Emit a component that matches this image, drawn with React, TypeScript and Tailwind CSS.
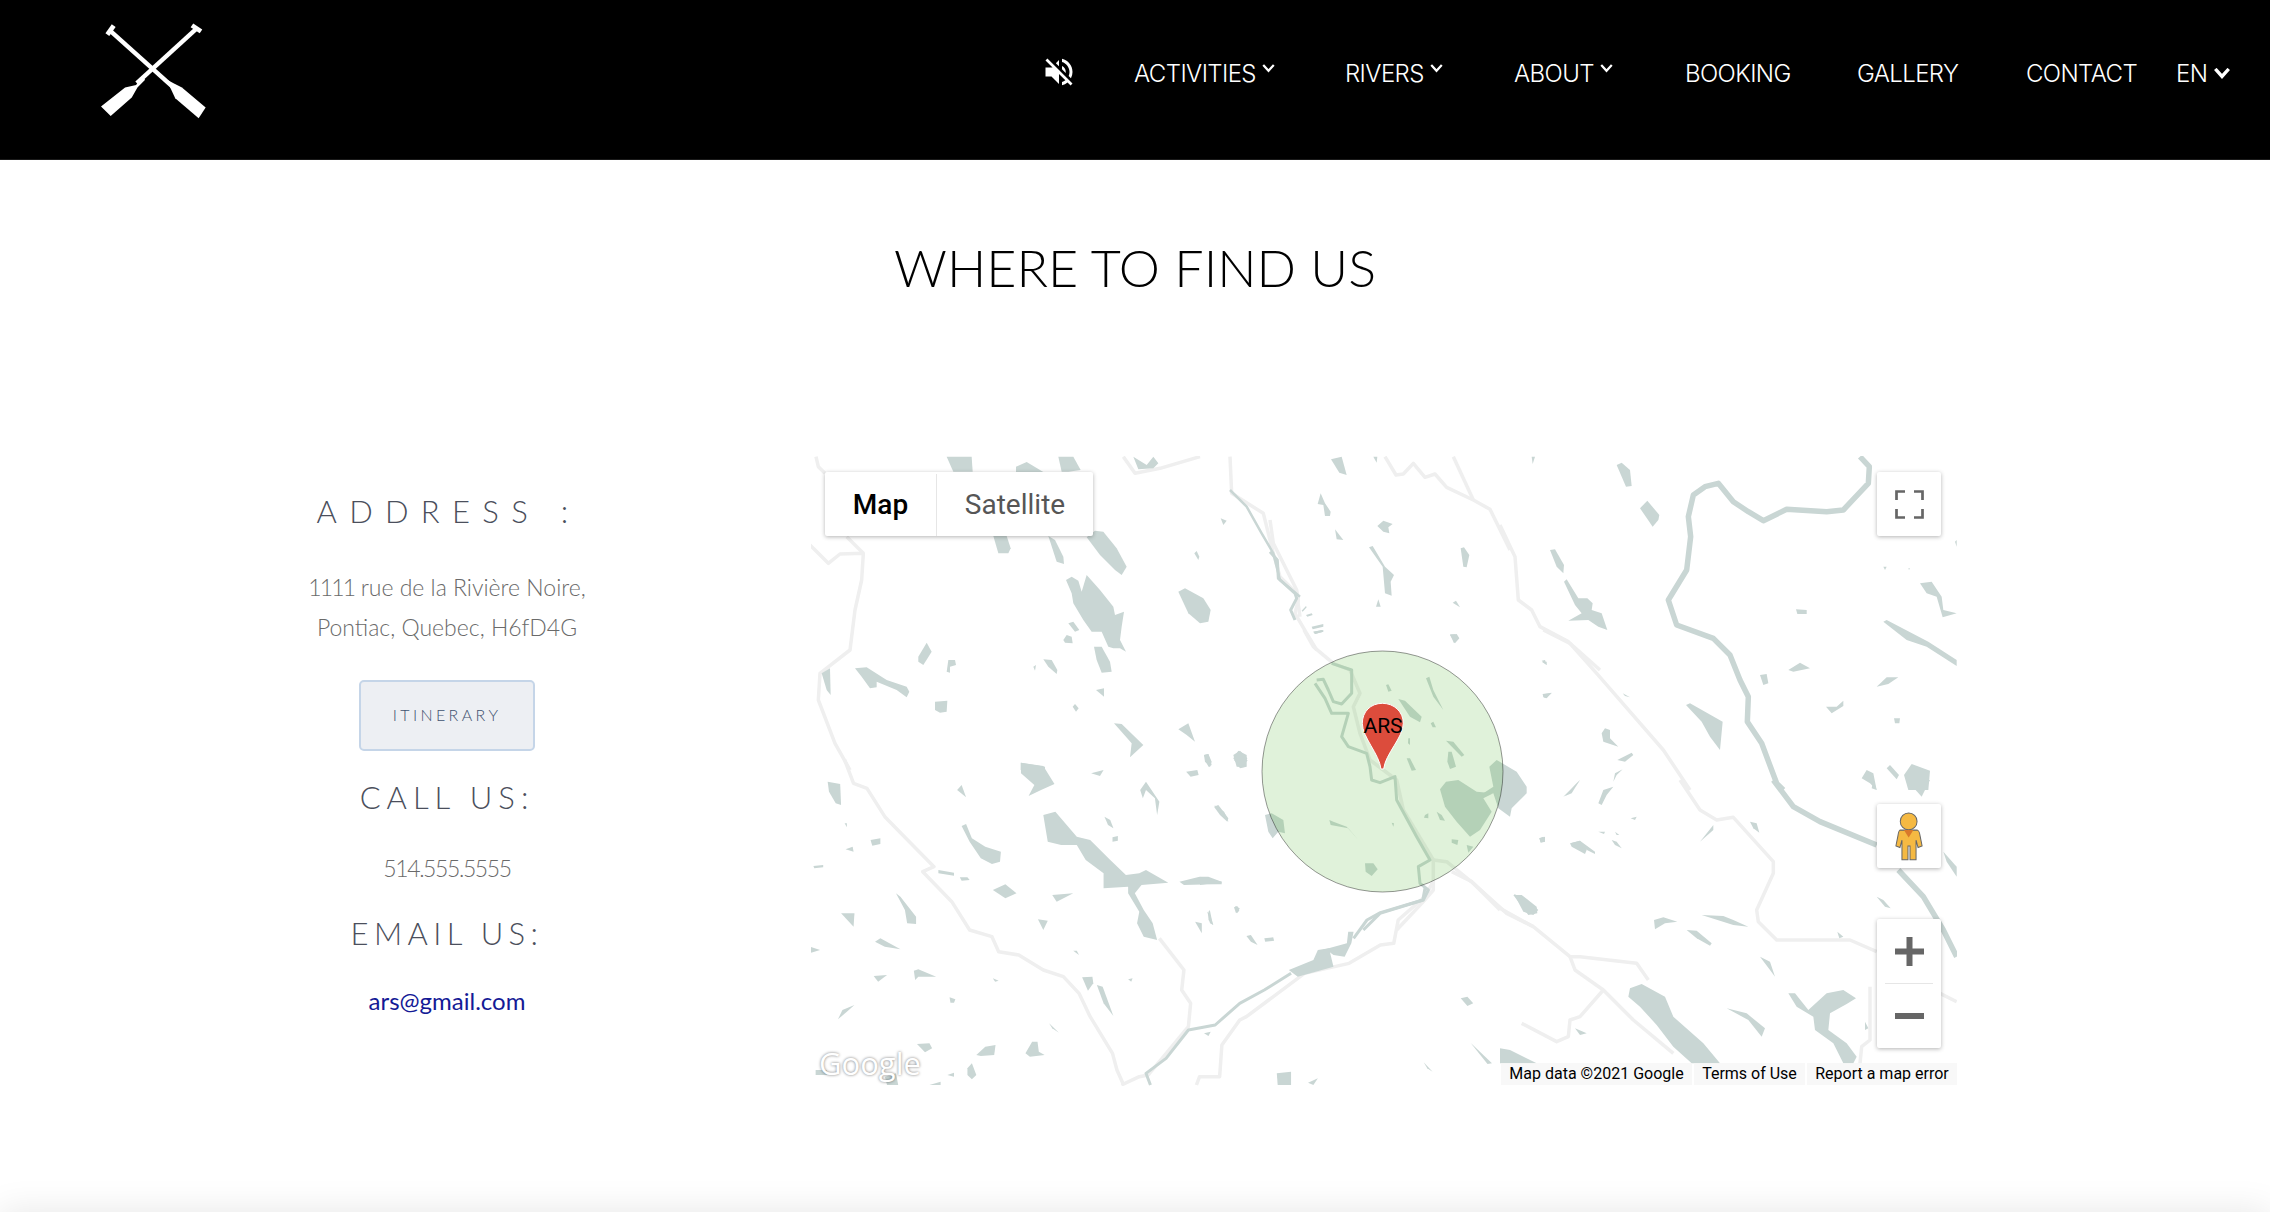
import React from "react";
import { MdVolumeOff } from "react-icons/md";

type Group = { x: number; y: number; sx: number; sy: number; water: string[]; rivers?: [string, number][]; roads: string[] };

const groups: Group[] = [
  {
    x: 800, y: 450, sx: 3, sy: 3,
    water: [
      "440,20 515,20 518,65 460,65", "648,50 680,36 730,66 648,66", "775,20 820,20 842,60 805,65 785,65",
      "580,258 620,258 632,295 625,310 595,310", "745,258 765,270 790,320 792,342 770,335",
      "885,242 910,245 950,295 980,350 965,375 945,360 900,315 860,262",
      "798,390 815,380 835,392 845,425 860,375 900,420 940,470 945,495 972,485 965,530 960,570 978,605 960,595 940,595 925,590 905,545 875,545 850,510 820,460 815,430",
      "805,520 820,515 838,540 825,545", "790,570 800,555 815,560 818,580 795,578", "882,590 905,590 930,635 935,665 905,668 890,630",
      "1135,425 1155,415 1210,445 1232,480 1225,515 1200,520 1165,490", "1262,205 1280,212 1270,225", "1183,310 1190,303 1198,320 1195,330",
      "355,620 380,578 395,605 370,645 355,635", "440,665 445,630 465,630 468,645 450,650 450,668",
      "165,655 200,652 260,690 320,710 328,725 320,742 290,720 230,695 230,712 210,715 185,680", "65,670 90,655 92,735 80,720",
      "405,755 442,752 440,785 420,788 405,780", "730,628 755,630 772,660 770,672 745,650", "700,650 708,645 705,662", "888,720 912,715 912,740",
      "818,770 825,762 836,775 828,785", "942,820 965,822 1030,885 990,922 995,880", "1135,838 1165,820 1185,875 1160,855",
      "1212,915 1225,912 1235,945 1225,950", "1300,925 1315,902 1340,915 1340,950 1320,955", "662,938 735,950 735,960 662,960",
      "1000,20 1040,45 1060,20 1075,40 1060,55 1015,58",
    ],
    rivers: [["1290,120 1340,170 1385,250 1420,310 1440,390 1500,440", 2.5]],
    roads: [
      "48,20 55,50 75,70", "30,285 85,340 120,312 190,310 185,390 165,480 150,600 60,670 55,750 105,880 150,960", "140,260 190,310",
      "970,20 1005,70 1080,55 1200,20", "1290,20 1295,130 1390,190 1420,310 1440,380 1490,430 1500,500",
    ],
  },
  {
    x: 1270, y: 450, sx: 3, sy: 3,
    water: [
      "183,28 215,20 230,75 208,68", "310,20 322,20 320,38", "152,130 165,160 182,185 180,198 165,198 160,165 143,162", "195,238 220,270 200,268",
      "322,228 340,212 368,222 355,232 358,250 340,245", "297,292 308,288 345,350 372,375 362,395 365,437 345,430 338,350",
      "572,295 582,292 598,315 590,352 580,350", "318,470 325,448 332,470", "548,458 558,452 570,472", "540,553 555,553 567,565 552,580",
      "95,482 108,468 110,472 98,485", "108,495 125,490 128,495 112,500", "125,530 160,522 160,530 128,538", "130,545 160,540 160,545 135,552",
    ],
    rivers: [["0,305 22,330 25,385 75,430 80,445 62,480 75,510", 3]],
    roads: ["345,20 378,75 400,72 430,40 465,82 495,72 530,112 610,150 660,178 720,300", "550,20 610,150", "0,210 10,280 80,420 85,450 75,490 110,550 140,600"],
  },
  {
    x: 1200, y: 630, sx: 3, sy: 3,
    water: [
      "340,5 365,0 370,5 345,12", "750,15 770,12 778,25 765,40", "1025,95 1040,95 1040,105", "1028,192 1055,188 1040,205 1030,202",
      "12,375 25,372 35,395 30,412 15,395", "100,375 120,362 142,385 130,412 110,410", "42,530 55,525 85,565 82,575 60,555",
      "195,555 215,550 250,570 255,610 235,605 218,625 205,605", "0,740 25,740 65,755 65,763 20,762 0,765", "102,832 112,828 118,842 108,850", "22,845 28,850 40,885 30,880",
      "868,410 890,390 950,425 980,470 980,490 935,535 930,560 895,535 880,490 850,490 880,470",
      "720,478 738,455 775,450 830,485 880,490 850,505 875,545 840,600 810,620 770,575 735,530",
      "558,165 565,163 575,182 565,185", "678,145 688,140 700,180 730,240 700,200", "595,207 615,212 665,260 660,277 630,260", "692,280 700,275 708,292 698,292",
      "738,332 760,335 793,375 785,380 760,355", "745,365 755,365 768,410 750,417 742,395", "620,385 630,385 648,420 635,422", "625,325 630,325 630,345 624,340",
      "675,555 685,550 685,565 672,563", "710,545 725,555 735,572 720,570", "575,578 582,580 580,590", "755,628 775,630 772,645 755,638", "800,645 820,650 805,668",
      "495,700 520,700 533,718 515,738 497,725", "388,570 400,575 440,590 475,630 445,595 392,585",
      "1110,640 1140,632 1160,660 1155,672 1115,650", "1018,625 1030,620 1035,635 1022,637", "940,795 965,795 1010,830 1012,850 985,855", "1090,500 1140,450 1110,490",
    ],
    rivers: [
      ["350,150 370,148 385,180 400,215 425,222 455,190 455,120 395,100", 3],
      ["345,160 375,205 395,250 445,250 425,320 445,350 500,370 510,410 515,450 540,458 585,440 590,510 650,620 690,690 655,710 660,760 685,780 670,810 540,850 490,900", 3],
    ],
    roads: ["312,0 340,50 400,100 450,120 480,190 460,230 480,310 510,390 590,450 610,540 700,690 700,780 670,815 590,900", "700,690 740,695 820,760 920,850 1000,890", "1030,0 1110,40 1200,120"],
  },
  {
    x: 800, y: 760, sx: 2.24, sy: 3,
    water: [
      "495,8 545,18 570,72 540,90 512,108 525,75 495,40", "652,40 680,30 672,48", "865,35 890,30 893,45 875,50", "910,0 920,0 918,20", "972,0 1003,0 990,22",
      "62,65 90,72 92,135 80,130 65,95", "352,90 362,75 372,112", "100,190 105,190 105,202", "158,240 180,235 180,252 162,257", "102,268 118,260 120,275", "30,318 52,315 52,322 32,325",
      "362,198 372,192 385,235 415,260 450,275 448,305 430,312 405,295 380,245",
      "545,165 572,155 620,230 650,240 695,300 730,345 760,340 775,330 825,368 765,375 750,400 770,450 790,490 800,540 770,530 755,490 760,455 735,400 735,380 680,385 680,340 640,300 620,255 585,255 555,245",
      "850,365 895,350 945,365 942,372 860,375", "310,330 345,338 345,347 310,340", "358,352 375,352 380,360 362,362", "432,390 460,373 485,400 460,415", "565,405 612,400 575,425",
      "215,400 225,410 260,470 260,492 240,490 235,450", "92,460 122,460 120,500", "168,545 180,535 225,568 190,560", "22,560 45,570 25,578", "533,478 555,482 545,510", "612,572 620,572 625,585",
      "682,170 695,180 702,205 690,195", "700,232 712,228 712,242 700,245", "762,90 775,65 805,125 800,165 795,115 775,90 768,115", "928,135 950,155 960,185 945,165",
      "975,438 985,445 980,460", "885,485 900,490 900,520", "915,455 918,450 925,495 915,480", "1000,528 1010,525 1025,555 1010,545", "1040,535 1060,532 1062,542 1042,545",
      "165,648 195,645 175,665", "255,632 265,628 305,650 265,650 258,660", "432,655 445,662 437,665", "632,652 655,650 657,670 645,692", "665,675 678,680 702,768 680,730", "735,658 745,655 742,665",
      "335,712 348,718 345,728 337,728", "122,735 95,750 85,778 105,755", "558,790 580,818 565,805", "262,852 290,850 296,865 280,877", "395,885 415,860 438,855 435,885 405,888",
      "505,880 520,845 532,845 535,875 548,885 515,890", "375,925 385,910 395,945 385,958 375,945", "35,930 60,930 60,945 35,945", "190,950 215,940 220,975 195,975", "330,945 345,938 345,950", "290,975 315,965 315,975",
      "1480,715 1495,710 1508,730 1495,738", "1502,848 1550,910 1540,912", "1397,907 1417,935 1405,925", "1068,940 1100,935 1100,975 1070,975", "1138,968 1160,955 1150,975", "905,820 920,815 915,828",
      "1095,630 1150,600 1160,570 1185,565 1195,620 1115,650", "1170,570 1225,550 1228,515 1240,515 1235,550 1220,590 1195,585 1180,570",
    ],
    rivers: [
      ["785,975 775,940 820,895 870,810 930,795 985,730 1040,690 1100,640", 3],
      ["1240,535 1270,480 1300,458 1395,420 1400,385", 3],
    ],
    roads: [
      "100,0 120,70 150,85 190,170 230,225 300,320 275,335 340,425 380,510 430,530 445,575 490,585 545,630 590,650 625,700 650,770 700,880 710,930 725,975",
      "805,535 860,630 855,690 875,730 870,800 780,945 760,950 720,975",
      "1420,360 1400,410 1340,480 1330,550 1300,555 1230,610 1130,640 1050,720 1000,770 985,780 945,855 940,950 895,950 888,975",
      "1460,335 1505,365 1568,450",
    ],
  },
  {
    x: 1500, y: 450, sx: 3, sy: 3,
    water: [
      "350,45 365,38 390,60 395,108 378,110", "420,175 442,152 478,195 475,210 458,230", "150,300 165,298 192,345 190,370 170,350",
      "192,395 200,388 235,445 262,445 278,460 275,480 305,490 322,540 295,530 265,510 205,512 245,490 225,465",
      "125,632 135,630 140,645", "128,733 155,730 135,745", "95,20 105,20 98,42", "368,730 390,742 375,738",
      "558,765 570,760 668,815 660,900 630,860 605,815", "305,850 315,835 330,840 330,865 355,890 310,875", "352,930 395,908 400,915 375,935", "340,995 345,970 368,958 350,975", "212,1020 240,990 225,1005",
      "1150,515 1160,510 1285,575 1370,630 1370,648 1280,590 1220,570", "1260,400 1295,395 1325,440 1330,480 1370,490 1328,502 1310,440 1280,430",
      "888,478 920,480 920,492 892,492", "865,660 900,638 930,655 880,665", "780,675 800,672 805,700 790,705", "1130,710 1160,682 1195,682 1165,702", "978,770 1010,770 1030,752 1030,768 995,790",
      "1182,805 1200,805 1198,820 1185,820", "1150,350 1160,350 1155,360", "1225,355 1230,355 1227,360", "1365,275 1370,270 1370,290",
      "1212,975 1235,942 1290,962 1285,1020 1225,1020", "1160,955 1170,945 1197,975 1190,988", "1085,985 1100,960 1120,970 1130,1020 1110,1000",
    ],
    rivers: [["1080,20 1108,50 1105,100 1030,180 980,185 860,178 790,212 745,185 700,155 655,100 615,110 580,135 565,200 572,260 560,360 505,450 530,525 640,565 690,615 720,690 745,740 742,815 785,880 830,1000 850,1020", 5.5]],
    roads: ["0,225 45,320 55,450 95,480 120,530 205,575 290,670 490,900 570,1020"],
  },
  {
    x: 1500, y: 780, sx: 3, sy: 3,
    water: [
      "295,70 310,30 340,20 320,45 305,75", "392,115 410,110 405,120", "295,155 315,155 312,162", "345,155 358,165 350,165", "118,175 135,170 135,185 122,188", "212,190 240,182 285,215 285,222 250,205", "335,180 350,185 365,205 345,195",
      "600,185 640,135 640,150", "750,125 770,130 778,158 760,145", "42,342 80,358 115,390 100,405 70,395", "462,420 490,412 532,425 495,430 465,448", "560,450 590,452 635,490 630,497 590,475",
      "605,405 670,408 700,420 745,440 700,435", "780,530 810,545 825,590 810,570", "1130,350 1150,360 1172,385 1155,380", "1012,455 1030,470 1018,475",
      "390,625 425,612 495,650 520,710 610,790 660,850 575,850 520,800 470,735 420,680 385,650", "680,685 740,700 795,745 785,770 745,720", "225,745 260,760 240,765",
      "865,640 885,640 925,690 980,640 1030,630 1068,655 1040,672 990,700 985,750 1040,790 1070,830 1060,850 1030,850 1000,790 945,750 940,710 890,680",
      "1095,725 1105,745 1095,750", "0,805 30,810 110,850 0,850", "1120,0 1130,30 1115,25", "1220,0 1290,0 1265,50",
      "1330,215 1370,260 1370,290 1340,245", "195,48 240,0 215,40",
    ],
    rivers: [
      ["820,0 880,80 960,125 1130,195", 5.5],
      ["1195,270 1270,350 1330,450 1370,530", 5.5],
    ],
    roads: [
      "540,0 600,90 650,120 700,112 820,245 820,280 770,390 775,425 830,480 1050,480 1130,515", "0,385 100,440 210,530 240,530 410,550 445,600",
      "210,530 225,570 310,630 400,720 520,820", "310,630 240,710 210,720 205,770 170,785 65,730", "1110,620 1110,780 1085,800 1080,850", "1320,640 1370,665",
    ],
  },
];

function MapArt() {
  return (
    <svg viewBox="811 456 1146 630" className="absolute inset-0 h-full w-full" aria-hidden="true">
      {groups.map((g, i) => (
        <g key={`r${i}`} transform={`translate(${g.x} ${g.y}) scale(${1 / g.sx} ${1 / g.sy})`}>
          {g.roads.map((p, j) => (
            <polyline key={j} points={p} fill="none" stroke="#efefef" strokeWidth={3.5} strokeLinejoin="round" vectorEffect="non-scaling-stroke" />
          ))}
        </g>
      ))}
      {groups.map((g, i) => (
        <g key={`w${i}`} transform={`translate(${g.x} ${g.y}) scale(${1 / g.sx} ${1 / g.sy})`}>
          {(g.rivers || []).map(([p, w], j) => (
            <polyline key={j} points={p} fill="none" stroke="#c9d6d4" strokeWidth={w} strokeLinejoin="round" vectorEffect="non-scaling-stroke" />
          ))}
          {g.water.map((p, j) => (
            <polygon key={j} points={p} fill="#c9d6d4" />
          ))}
        </g>
      ))}
      <circle cx={1382.5} cy={771.5} r={120.5} fill="#64be46" fillOpacity={0.2} stroke="#000" strokeOpacity={0.4} strokeWidth={1} />
      <g transform="translate(1200 630) scale(0.3333)">
        <path
          d="M543,417 L551,417 C556,372 610,322 610,280 C610,245 582,220 547,220 C512,220 487,245 487,280 C487,322 538,372 543,417Z"
          fill="#dc4c3c"
          stroke="#fff"
          strokeWidth={1}
          vectorEffect="non-scaling-stroke"
        />
      </g>
    </svg>
  );
}

function Chevron({ w, sw }: { w: number; sw: number }) {
  return (
    <svg width={w} height={w * 0.7} viewBox="0 0 14 10" fill="none" stroke="#fff" strokeWidth={sw} strokeLinecap="square">
      <polyline points="2,2 7,7.5 12,2" />
    </svg>
  );
}

function Logo() {
  return (
    <svg width={107} height={98} viewBox="300 62 320 293" fill="#fff" aria-label="logo">
      <g stroke="#fff" strokeWidth={13} strokeLinecap="butt">
        <line x1={322} y1={100} x2={341} y2={73} strokeWidth={14} />
        <line x1={330} y1={88} x2={520} y2={258} />
        <line x1={575} y1={72} x2={602} y2={90} strokeWidth={14} />
        <line x1={587} y1={83} x2={410} y2={245} />
      </g>
      <polygon points="500,235 520,245 545,258 616,318 595,350 525,290 512,262" />
      <polygon points="425,225 408,250 375,258 303,315 332,343 395,288 412,258 435,235" />
    </svg>
  );
}

function Pegman() {
  return (
    <svg width={30} height={49} viewBox="1182 94 86 146" aria-hidden="true">
      <path
        d="M1198,148 L1250,148 Q1256,150 1258,165 L1264,195 L1252,200 L1246,178 L1246,236 L1228,236 L1228,195 L1222,195 L1222,236 L1204,236 L1204,178 L1198,200 L1186,195 L1192,165 Q1194,150 1198,148Z"
        fill="#f5b942"
        stroke="#666"
        strokeWidth={3}
      />
      <circle cx={1224} cy={122} r={25} fill="#f5b942" stroke="#666" strokeWidth={3} />
      <polygon points="1210,148 1238,148 1224,170" fill="#d9792b" />
    </svg>
  );
}

const nav: { label: string; w: string; chev?: boolean }[] = [
  { label: "ACTIVITIES", w: "w-[211px]", chev: true },
  { label: "RIVERS", w: "w-[169px]", chev: true },
  { label: "ABOUT", w: "w-[171px]", chev: true },
  { label: "BOOKING", w: "w-[172px]" },
  { label: "GALLERY", w: "w-[169px]" },
  { label: "CONTACT", w: "w-[150px]" },
];

const heading = "text-center text-[31px] leading-[40px] font-light text-[#4b4f5c]";
const body = "text-center text-[23px] leading-[40px] font-light text-[#6a6a6a]";

export default function App() {
  return (
    <div className="flex h-[1212px] flex-col overflow-hidden bg-white [font-family:Lato,sans-serif]">
      <header className="flex h-[160px] shrink-0 items-start border-b border-[#1a1a1a] bg-black pl-[100px] pt-[22px]">
        <Logo />
        <nav className="ml-[837px] mt-[30px] flex items-start text-white [font-family:Inter,sans-serif]">
          <div className="flex h-[44px] w-[90px] items-center">
            <MdVolumeOff size={36} className="-ml-[3px] -mt-[4px]" />
          </div>
          {nav.map((n) => (
            <a key={n.label} className={`${n.w} flex h-[44px] items-center gap-[6px] text-[24px] font-light tracking-[-0.6px]`}>
              <span>{n.label}</span>
              {n.chev && (
                <span className="-mt-[11px]">
                  <Chevron w={13} sw={2.4} />
                </span>
              )}
            </a>
          ))}
          <div className="flex h-[44px] items-center gap-[7px] text-[24px] font-light tracking-[-0.6px]">
            <span>EN</span>
            <Chevron w={16} sw={3} />
          </div>
        </nav>
      </header>

      <h1 className="mt-[74px] h-[66px] shrink-0 text-center text-[52px] leading-[66px] font-light tracking-[0.05px] text-black">
        WHERE TO FIND US
      </h1>

      <main className="mt-[156px] flex h-[630px] shrink-0 items-start">
        <section className="ml-[147px] flex w-[600px] flex-col items-center pt-[35px]">
          <h3 className={`${heading} pl-[3px] tracking-[12.3px]`}>ADDRESS :</h3>
          <p className={`${body} mt-[36px]`}>
            <span className="tracking-[-1.8px]">1111</span> rue de la Rivière Noire,
            <br />
            Pontiac, Quebec, H6fD4G
          </p>
          <a className="mt-[33px] flex h-[71px] w-[176px] items-center justify-center rounded-[5px] border-2 border-[#c5d5e8] bg-[#edeff3] pb-[2px] text-[16px] font-light tracking-[3.4px] text-[#3f5270]">
            ITINERARY
          </a>
          <h3 className={`${heading} mt-[26px] tracking-[6px]`}>CALL US:</h3>
          <p className={`${body} mt-[31px] tracking-[-1.4px]`}>514.555.5555</p>
          <h3 className={`${heading} mt-[25px] tracking-[5.4px]`}>EMAIL US:</h3>
          <a className="mt-[28px] text-center text-[24px] leading-[40px] font-normal text-[#141a96]">ars@gmail.com</a>
        </section>

        <div className="relative ml-[64px] h-[630px] w-[1146px] overflow-hidden bg-white [font-family:Roboto,sans-serif]">
          <MapArt />
          <span className="absolute left-[540px] top-[258px] w-[64px] text-center text-[21px] leading-[24px] text-black">
            ARS
          </span>

          <div className="absolute left-[14px] top-[16px] flex h-[64px] rounded-[2px] bg-white pt-[2px] text-[28px] shadow-[0_1px_4px_rgba(0,0,0,0.3)]">
            <div className="flex w-[112px] items-center justify-center border-r border-[#e6e6e6] font-medium text-black">Map</div>
            <div className="flex w-[156px] items-center justify-center text-[#565656]">Satellite</div>
          </div>

          <div className="absolute left-[1066px] top-[16px] flex h-[64px] w-[64px] items-center justify-center rounded-[2px] bg-white shadow-[0_1px_4px_rgba(0,0,0,0.3)]">
            <svg width={29} height={29} viewBox="0 0 29 29" fill="none" stroke="#666" strokeWidth={2.7}>
              <path d="M1.5,10 V1.5 H10 M19,1.5 H27.5 V10 M1.5,19 V27.5 H10 M27.5,19 V27.5 H19" />
            </svg>
          </div>

          <div className="absolute left-[1066px] top-[348px] flex h-[64px] w-[64px] items-center justify-center rounded-[2px] bg-white shadow-[0_1px_4px_rgba(0,0,0,0.3)]">
            <Pegman />
          </div>

          <div className="absolute left-[1066px] top-[463px] flex h-[129px] w-[64px] flex-col items-center rounded-[2px] bg-white shadow-[0_1px_4px_rgba(0,0,0,0.3)]">
            <div className="flex h-[64px] items-center justify-center">
              <svg width={29} height={29} viewBox="0 0 29 29" fill="#666">
                <rect x={0} y={11.5} width={29} height={6} />
                <rect x={11.5} y={0} width={6} height={29} />
              </svg>
            </div>
            <div className="h-px w-[48px] bg-[#e6e6e6]" />
            <div className="flex h-[64px] items-center justify-center">
              <svg width={29} height={6} viewBox="0 0 29 6" fill="#666">
                <rect x={0} y={0} width={29} height={6} />
              </svg>
            </div>
          </div>

          <span className="absolute left-[8px] top-[589px] text-[31px] leading-[36px] font-medium text-white [text-shadow:0_0_3px_rgba(0,0,0,0.55)] [font-family:'Open_Sans',sans-serif]">
            Google
          </span>

          <div className="absolute right-0 top-[607px] flex h-[22px] gap-[2px] text-[16px] leading-[22px] text-black">
            <span className="w-[191px] bg-[#f5f5f5]/75 text-center">Map data ©2021 Google</span>
            <span className="w-[111px] bg-[#f5f5f5]/75 text-center">Terms of Use</span>
            <span className="w-[150px] bg-[#f5f5f5]/75 text-center">Report a map error</span>
          </div>
        </div>
      </main>

      <footer className="mt-[126px] h-[40px] w-full shrink-0 bg-white shadow-[0_0_36px_rgba(0,0,0,0.1)]" />
    </div>
  );
}
